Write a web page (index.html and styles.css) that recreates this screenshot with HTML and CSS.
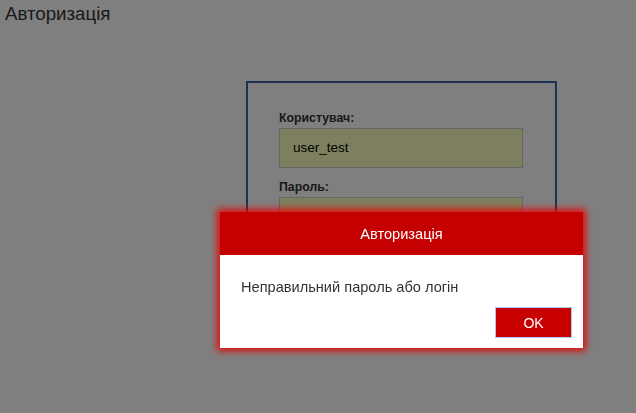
FILE: index.html
```html
<!DOCTYPE html>
<html lang="uk">
<head>
<meta charset="utf-8">
<title>Авторизація</title>
<link rel="stylesheet" href="styles.css">
</head>
<body>
<h1 class="page-title">Авторизація</h1>
<div class="login-wrap">
  <form class="login-card">
    <label class="field-label">Користувач:</label>
    <div class="field-input">user_test</div>
    <label class="field-label field-label-second">Пароль:</label>
    <div class="field-input"></div>
  </form>
</div>
<div class="overlay"></div>
<div class="modal">
  <div class="modal-header">Авторизація</div>
  <div class="modal-body">
    <p class="modal-text">Неправильний пароль або логін</p>
    <div class="modal-actions">
      <button class="modal-ok" type="button">OK</button>
    </div>
  </div>
</div>
</body>
</html>
```

FILE: styles.css
```css
html, body {
  margin: 0;
  padding: 0;
  background: #ffffff;
  font-family: "Liberation Sans", Arial, sans-serif;
  color: #333333;
  height: 100%;
  overflow: hidden;
}

.page-title {
  margin: 0;
  padding: 3px 0 0 5px;
  font-size: 18.7px;
  font-weight: normal;
  line-height: 22px;
  color: #333333;
}

.login-wrap {
  margin: 56px 0 0 246px;
}

.login-card {
  width: 245px;
  padding: 28px 31px 93px 31px;
  border: 2px solid #3a63a8;
  display: flex;
  flex-direction: column;
}

.field-label {
  font-size: 12.3px;
  font-weight: bold;
  line-height: 14px;
  color: #333333;
  margin-bottom: 3px;
}

.field-label-second {
  margin-top: 12px;
}

.field-input {
  box-sizing: border-box;
  width: 244px;
  height: 40px;
  border: 1px solid #cccccc;
  background: #faffbd;
  padding: 0 13px;
  font-size: 13.5px;
  line-height: 38px;
  color: #000000;
}

.overlay {
  position: fixed;
  inset: 0;
  background: rgba(0, 0, 0, 0.5);
}

.modal {
  position: fixed;
  left: 220px;
  top: 212px;
  width: 363px;
  height: 136px;
  background: #ffffff;
  box-shadow: 0 0 7px 3px rgba(235, 0, 0, 0.9);
  display: flex;
  flex-direction: column;
}

.modal-header {
  height: 43px;
  background: #c40000;
  color: #ffffff;
  font-size: 14.6px;
  line-height: 45px;
  text-align: center;
}

.modal-body {
  flex: 1;
  display: flex;
  flex-direction: column;
  padding: 0 11px 10px 21px;
}

.modal-text {
  margin: 24px 0 0 0;
  font-size: 14.6px;
  line-height: 17px;
  color: #333333;
}

.modal-actions {
  margin-top: auto;
  display: flex;
  justify-content: flex-end;
}

.modal-ok {
  width: 77px;
  height: 31px;
  background: #c80000;
  border: 1px solid #a9c4f5;
  color: #ffffff;
  font-family: "Liberation Sans", Arial, sans-serif;
  font-size: 14px;
  padding: 0;
  cursor: pointer;
}
```
